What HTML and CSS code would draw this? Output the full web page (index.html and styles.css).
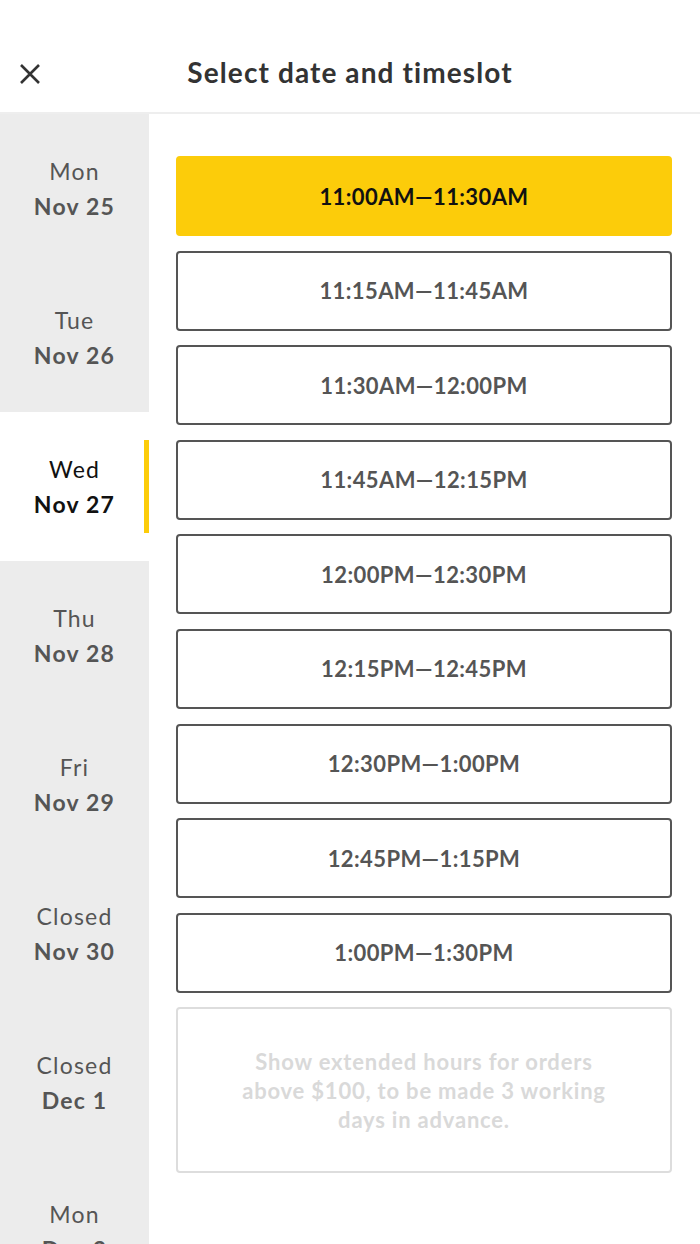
FILE: index.html
```html
<!DOCTYPE html>
<html lang="en">
<head>
    <meta charset="utf-8">
    <title>Select date and timeslot</title>
    <link rel="stylesheet" href="styles.css">
</head>
<body>
    <header class="topbar">
        <button class="close" aria-label="Close">
            <svg width="22" height="22" viewBox="0 0 22 22">
                <path d="M2 2 L20 20 M20 2 L2 20" stroke="#333" stroke-width="2.6" fill="none"/>
            </svg>
        </button>
        <h1>Select date and timeslot</h1>
    </header>
    <div class="picker">
        <ul class="days">
            <li class="day"><span class="dow">Mon</span><span class="date">Nov 25</span></li>
            <li class="day"><span class="dow">Tue</span><span class="date">Nov 26</span></li>
            <li class="day active"><span class="dow">Wed</span><span class="date">Nov 27</span></li>
            <li class="day"><span class="dow">Thu</span><span class="date">Nov 28</span></li>
            <li class="day"><span class="dow">Fri</span><span class="date">Nov 29</span></li>
            <li class="day"><span class="dow">Closed</span><span class="date">Nov 30</span></li>
            <li class="day"><span class="dow">Closed</span><span class="date">Dec 1</span></li>
            <li class="day"><span class="dow">Mon</span><span class="date">Dec 2</span></li>
        </ul>
        <div class="slots">
            <button class="slot selected">11:00AM—11:30AM</button>
            <button class="slot">11:15AM—11:45AM</button>
            <button class="slot">11:30AM—12:00PM</button>
            <button class="slot">11:45AM—12:15PM</button>
            <button class="slot">12:00PM—12:30PM</button>
            <button class="slot">12:15PM—12:45PM</button>
            <button class="slot">12:30PM—1:00PM</button>
            <button class="slot">12:45PM—1:15PM</button>
            <button class="slot">1:00PM—1:30PM</button>
            <button class="slot extended" disabled>Show extended hours for orders above $100, to be made 3 working days in advance.</button>
        </div>
    </div>
</body>
</html>
```

FILE: styles.css
```css
body {
    margin: 0;
    font-family: 'Lato', 'Noto Sans', sans-serif;
    background: #fff;
    color: #333;
    height: 1244px;
    overflow: hidden;
}
.topbar {
    position: relative;
    height: 114px;
    border-bottom: 2px solid #eee;
    display: flex;
    align-items: center;
    justify-content: center;
    box-sizing: border-box;
    padding-top: 32px;
}
.topbar h1 {
    margin: 0;
    font-size: 28px;
    font-weight: 700;
    color: #333;
    letter-spacing: 1.1px;
}
.close {
    position: absolute;
    left: 19px;
    top: 63px;
    background: none;
    border: none;
    padding: 0;
    width: 22px;
    height: 22px;
    cursor: pointer;
}
.picker {
    display: flex;
}
.days {
    list-style: none;
    margin: 0;
    padding: 0;
    width: 149px;
    flex-shrink: 0;
    background: #ececec;
}
.day {
    position: relative;
    height: 149px;
    display: flex;
    flex-direction: column;
    align-items: center;
    justify-content: center;
    color: #555;
    font-size: 23px;
    line-height: 35px;
    letter-spacing: 1.2px;
}
.day .date {
    font-weight: 700;
}
.day.active {
    background: #fff;
    color: #111;
}
.day.active::after {
    content: '';
    position: absolute;
    right: 0;
    top: 28px;
    width: 5px;
    height: 93px;
    background: #fccc0a;
}
.slots {
    flex: 1;
    display: flex;
    flex-direction: column;
    gap: 14.6px;
    padding: 42px 28px 0 27px;
}
.slot {
    height: 80px;
    border: 2px solid #555;
    border-radius: 4px;
    background: #fff;
    color: #555;
    font-family: inherit;
    font-size: 22px;
    font-weight: 700;
    letter-spacing: 0.4px;
    cursor: pointer;
}
.slot.selected {
    background: #fccc0a;
    border-color: #fccc0a;
    color: #111;
}
.slot.extended {
    height: 166px;
    border-color: #ddd;
    color: #d9d9d9;
    line-height: 29px;
    padding: 0 54px;
    letter-spacing: 0.8px;
    cursor: default;
}
```
